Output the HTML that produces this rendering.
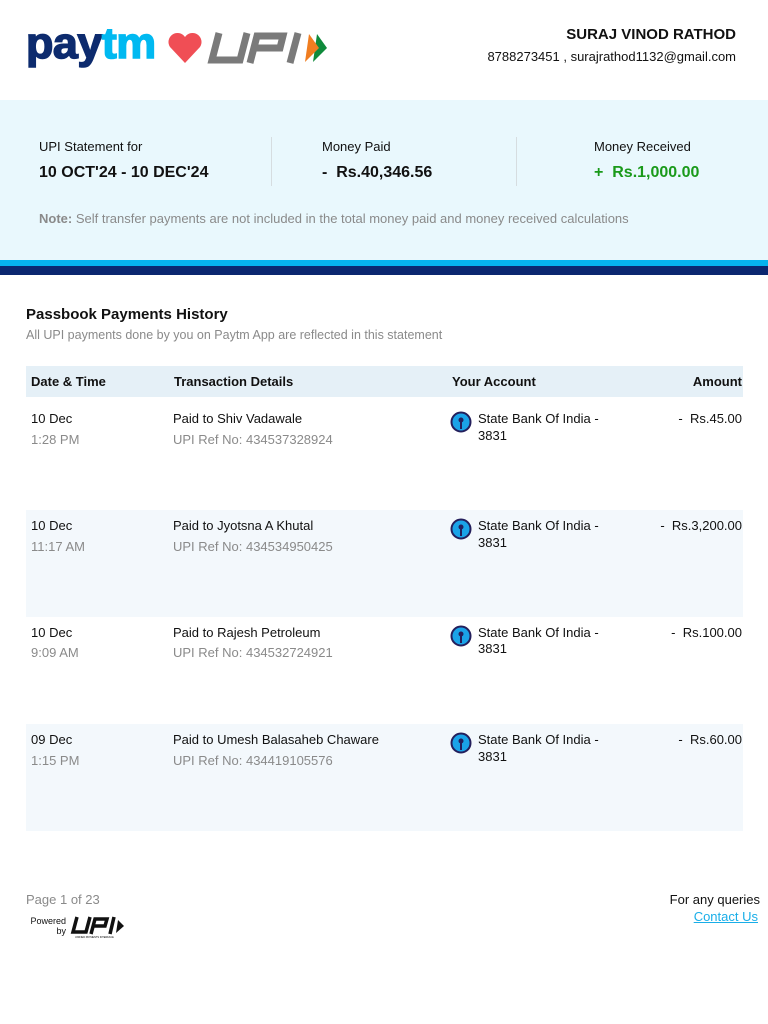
<!DOCTYPE html>
<html><head><meta charset="utf-8"><style>
*{margin:0;padding:0;box-sizing:border-box}
body{width:768px;height:1024px;background:#fff;font-family:"Liberation Sans",sans-serif;color:#111;position:relative;overflow:hidden}
.a{position:absolute;white-space:nowrap}
.g{color:#8a8a8a}
.row{position:absolute;left:26px;width:717px;font-size:13px}
.row .a{font-size:13px}
</style></head><body>
<div class="a" style="left:26px;top:22px;font-size:44px;font-weight:900;letter-spacing:-0.5px;line-height:44px;transform:scaleX(1.02);transform-origin:left"><span style="color:#0d2b6e;-webkit-text-stroke:1.5px #0d2b6e">pay</span><span style="color:#00b9f1;-webkit-text-stroke:1.5px #00b9f1">tm</span></div>
<svg class="a" style="left:167px;top:32px" width="36" height="32" viewBox="0 0 36 32"><path d="M18 31 L3 15 A8.5 8.5 0 0 1 18 5 A8.5 8.5 0 0 1 33 15 Z" fill="#f04e55"/></svg>
<svg class="a" style="left:205px;top:30px" width="135" height="36" viewBox="0 0 135 36"><g fill="none" stroke="#7a7a7a" stroke-width="7"><path d="M14 3 L7 30 H35 L42 3"/><path d="M45 33 L52 6 H78 L75 18 H51"/><path d="M93 3 L85 33"/></g><path d="M112 4 L122 18 L108 32 Z" fill="#0f8a3b"/><path d="M104 4 L114 18 L100 32 Z" fill="#f07d20"/></svg>
<div class="a" style="right:32px;top:26px;font-size:15px;font-weight:bold">SURAJ VINOD RATHOD</div>
<div class="a" style="right:32px;top:49px;font-size:13px">8788273451 , surajrathod1132@gmail.com</div>

<div class="a" style="left:0;top:100px;width:768px;height:160px;background:#e9f8fd"></div>
<div class="a" style="left:0;top:260px;width:768px;height:6px;background:#06b2ee"></div>
<div class="a" style="left:0;top:266px;width:768px;height:9px;background:#0b2770"></div>
<div class="a" style="left:271px;top:137px;width:1px;height:49px;background:#d6dde0"></div>
<div class="a" style="left:516px;top:137px;width:1px;height:49px;background:#d6dde0"></div>
<div class="a" style="left:39px;top:139px;font-size:13px">UPI Statement for</div>
<div class="a" style="left:39px;top:164px;font-size:16px;font-weight:bold">10 OCT'24 - 10 DEC'24</div>
<div class="a" style="left:322px;top:139px;font-size:13px">Money Paid</div>
<div class="a" style="left:322px;top:164px;font-size:16px;font-weight:bold">-&nbsp; Rs.40,346.56</div>
<div class="a" style="left:594px;top:139px;font-size:13px">Money Received</div>
<div class="a" style="left:594px;top:164px;font-size:16px;font-weight:bold;color:#1a9a1a">+&nbsp; Rs.1,000.00</div>
<div class="a g" style="left:39px;top:211px;font-size:13px"><b>Note:</b> Self transfer payments are not included in the total money paid and money received calculations</div>

<div class="a" style="left:26px;top:306px;font-size:15px;font-weight:bold">Passbook Payments History</div>
<div class="a g" style="left:26px;top:328px;font-size:12.5px">All UPI payments done by you on Paytm App are reflected in this statement</div>

<div class="row" style="top:366px;height:31px;background:#e5f0f7;font-weight:bold">
<div class="a" style="left:5px;top:8px">Date &amp; Time</div><div class="a" style="left:148px;top:8px">Transaction Details</div><div class="a" style="left:426px;top:8px">Your Account</div><div class="a" style="right:1px;top:8px">Amount</div></div>

<div class="row" style="top:397px;height:113px;background:#fff">
<div class="a" style="left:5px;top:14px">10 Dec</div><div class="a g" style="left:5px;top:35px">1:28 PM</div>
<div class="a" style="left:147px;top:14px">Paid to Shiv Vadawale</div><div class="a g" style="left:147px;top:35px">UPI Ref No: 434537328924</div>
<svg class="a" style="left:424px;top:14px" width="22" height="22" viewBox="0 0 22 22"><circle cx="11" cy="11" r="9.5" fill="#1aa3e8" stroke="#241f5c" stroke-width="2"/><circle cx="11" cy="9" r="2.5" fill="#241f5c"/><rect x="10" y="9" width="2" height="9" fill="#241f5c"/></svg>
<div class="a" style="left:452px;top:14px">State Bank Of India -</div><div class="a" style="left:452px;top:31px">3831</div>
<div class="a" style="right:1px;top:14px">-&nbsp; Rs.45.00</div></div>

<div class="row" style="top:510px;height:107px;background:#f3f8fc">
<div class="a" style="left:5px;top:8px">10 Dec</div><div class="a g" style="left:5px;top:29px">11:17 AM</div>
<div class="a" style="left:147px;top:8px">Paid to Jyotsna A Khutal</div><div class="a g" style="left:147px;top:29px">UPI Ref No: 434534950425</div>
<svg class="a" style="left:424px;top:8px" width="22" height="22" viewBox="0 0 22 22"><circle cx="11" cy="11" r="9.5" fill="#1aa3e8" stroke="#241f5c" stroke-width="2"/><circle cx="11" cy="9" r="2.5" fill="#241f5c"/><rect x="10" y="9" width="2" height="9" fill="#241f5c"/></svg>
<div class="a" style="left:452px;top:8px">State Bank Of India -</div><div class="a" style="left:452px;top:25px">3831</div>
<div class="a" style="right:1px;top:8px">-&nbsp; Rs.3,200.00</div></div>

<div class="row" style="top:617px;height:107px;background:#fff">
<div class="a" style="left:5px;top:8px">10 Dec</div><div class="a g" style="left:5px;top:28px">9:09 AM</div>
<div class="a" style="left:147px;top:8px">Paid to Rajesh Petroleum</div><div class="a g" style="left:147px;top:28px">UPI Ref No: 434532724921</div>
<svg class="a" style="left:424px;top:8px" width="22" height="22" viewBox="0 0 22 22"><circle cx="11" cy="11" r="9.5" fill="#1aa3e8" stroke="#241f5c" stroke-width="2"/><circle cx="11" cy="9" r="2.5" fill="#241f5c"/><rect x="10" y="9" width="2" height="9" fill="#241f5c"/></svg>
<div class="a" style="left:452px;top:8px">State Bank Of India -</div><div class="a" style="left:452px;top:24px">3831</div>
<div class="a" style="right:1px;top:8px">-&nbsp; Rs.100.00</div></div>

<div class="row" style="top:724px;height:107px;background:#f3f8fc">
<div class="a" style="left:5px;top:8px">09 Dec</div><div class="a g" style="left:5px;top:29px">1:15 PM</div>
<div class="a" style="left:147px;top:8px">Paid to Umesh Balasaheb Chaware</div><div class="a g" style="left:147px;top:29px">UPI Ref No: 434419105576</div>
<svg class="a" style="left:424px;top:8px" width="22" height="22" viewBox="0 0 22 22"><circle cx="11" cy="11" r="9.5" fill="#1aa3e8" stroke="#241f5c" stroke-width="2"/><circle cx="11" cy="9" r="2.5" fill="#241f5c"/><rect x="10" y="9" width="2" height="9" fill="#241f5c"/></svg>
<div class="a" style="left:452px;top:8px">State Bank Of India -</div><div class="a" style="left:452px;top:25px">3831</div>
<div class="a" style="right:1px;top:8px">-&nbsp; Rs.60.00</div></div>

<div class="a g" style="left:26px;top:892px;font-size:13px">Page 1 of 23</div>
<div class="a" style="left:26px;top:916px;font-size:9px;line-height:10px;text-align:right;width:40px">Powered<br>by</div>
<svg class="a" style="left:70px;top:915px" width="58" height="24" viewBox="0 0 58 24"><g fill="none" stroke="#111" stroke-width="3.5"><path d="M7 2 L3 17 H16 L20 2"/><path d="M21 19 L25 4 H37 L35 11 H24"/><path d="M44 2 L40 19"/></g><path d="M48 5 L54 11 L46 18 Z" fill="#111"/><text x="5" y="23" font-size="2.5" font-family="Liberation Sans">UNIFIED PAYMENTS INTERFACE</text></svg>
<div class="a" style="right:8px;top:892px;font-size:13px">For any queries</div>
<div class="a" style="right:10px;top:909px;font-size:13px;color:#19aee8;text-decoration:underline">Contact Us</div>
</body></html>
